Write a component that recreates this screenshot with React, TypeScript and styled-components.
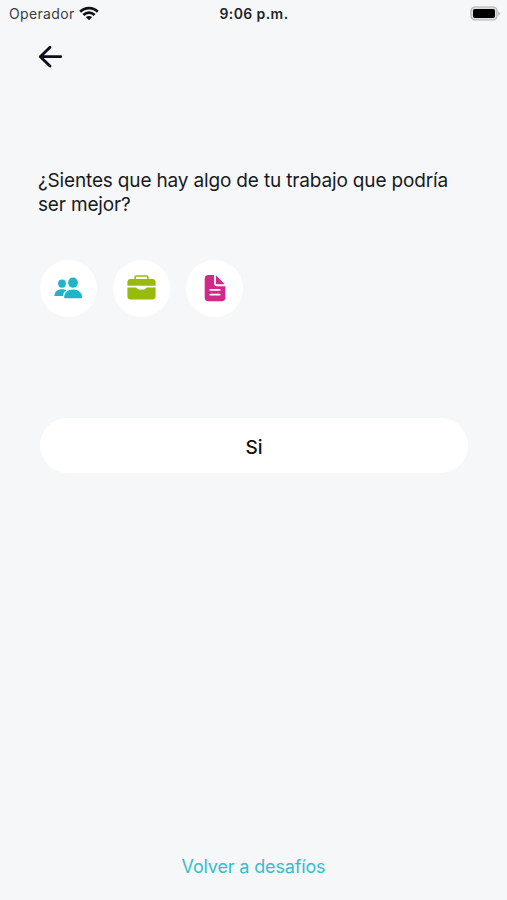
import React from "react";
import styled, { createGlobalStyle } from "styled-components";
import { IoDocumentText } from "react-icons/io5";

const GlobalStyle = createGlobalStyle`
  * { box-sizing: border-box; }
  body { margin: 0; background: #f5f7f9; }
  button { border: 0; padding: 0; background: none; font: inherit; cursor: pointer; }
`;

const Screen = styled.main`
  display: flex;
  flex-direction: column;
  height: 100vh;
  overflow: hidden;
  background: #f5f7f9;
  color: #191a1c;
  font-family: Inter, "Liberation Sans", sans-serif;
`;

const StatusBar = styled.header`
  display: grid;
  grid-template-columns: 1fr auto 1fr;
  align-items: center;
  height: 26px;
  padding: 0 6px 0 9px;
`;

const Carrier = styled.div`
  display: flex;
  align-items: center;
  gap: 4px;
  font-size: 14px;
  letter-spacing: 0.35px;
  color: #3b3c3e;
`;

const Clock = styled.time`
  margin-right: 2px;
  font-size: 14px;
  font-weight: 600;
  letter-spacing: 0.4px;
  color: #232426;
`;

const Battery = styled.svg`
  display: block;
  justify-self: end;
`;

const BackButton = styled.button`
  align-self: flex-start;
  margin: 19px 0 0 38px;
  width: 25px;
  height: 24px;
  svg { display: block; }
`;

const Question = styled.h1`
  margin: 100px 0 0 38px;
  font-size: 19px;
  font-weight: 400;
  line-height: 24px;
  letter-spacing: -0.16px;
  white-space: nowrap;
`;

const Topics = styled.div`
  display: flex;
  gap: 16px;
  margin: 43px 0 0 40px;
`;

const Topic = styled.button<{ $color: string }>`
  display: flex;
  align-items: center;
  justify-content: center;
  width: 57px;
  height: 57px;
  padding-bottom: 2px;
  border-radius: 50%;
  && { background: #fff; padding-bottom: 2px; }
  color: ${(p) => p.$color};
`;

const Answer = styled.button`
  height: 55px;
  margin: 101px 39px 0 40px;
  border-radius: 28px;
  color: #111;
  && { padding-top: 3px; background: #fff; font-size: 19px; font-weight: 500; }
`;

const BackLink = styled.button`
  align-self: center;
  margin: auto 0 21px;
  color: #35bdcd;
  && { font-size: 18px; line-height: 24px; }
  letter-spacing: -0.15px;
`;

const PeopleIcon = () => (
  <svg width="29" height="22" viewBox="0 0 29 22" fill="currentColor">
    <ellipse cx="8" cy="6.6" rx="3.9" ry="4.2" />
    <ellipse cx="19" cy="5.6" rx="4.9" ry="5.1" />
    <path d="M.4 18.9C.8 14.5 3.7 12.3 8 12.3c1.8 0 3.2.3 4.5 1C10.6 14.6 9.4 16.4 8.9 18.9Z" />
    <path d="M10.1 20.3c0-4.6 3.7-7.8 9-7.8s9 3.2 9 7.8c0 .5-.4.9-.9.9H11c-.5 0-.9-.4-.9-.9Z" />
  </svg>
);

const BriefcaseIcon = () => (
  <svg width="29" height="25" viewBox="0 0 29 25" fill="currentColor">
    <path d="M8.1 5V2.6C8.1 1.6 8.8 1 9.8 1h9.4c1 0 1.7.6 1.7 1.6V5" fill="none" stroke="currentColor" strokeWidth="1.6" />
    <path d="M3.5 4h22c1.8 0 3.1 1.3 3.1 3.1v3.7H.4V7.1C.4 5.3 1.7 4 3.5 4Z" />
    <path d="M.4 12.4h8.7c.4 0 .6.3.8.7.4.9 1.1 1.4 2 1.4h5.2c.9 0 1.6-.5 2-1.4.2-.4.4-.7.8-.7h8.7v9c0 1.8-1.3 3.1-3.1 3.1h-22C1.7 24.5.4 23.2.4 21.4Z" />
  </svg>
);

export default function App() {
  return (
    <>
      <GlobalStyle />
      <Screen>
        <StatusBar>
          <Carrier>
            <span>Operador</span>
            <svg width="20" height="15" viewBox="0 0 20 15" fill="none" stroke="#111214" strokeWidth="2.7">
              <path d="M1.2 5.7C6.2.9 13.8.9 18.8 5.7" />
              <path d="M4.4 8.9C7.6 5.9 12.4 5.9 15.6 8.9" />
              <path d="M10 14.2 6.9 11.1C8.7 9.5 11.3 9.5 13.1 11.1Z" fill="#111214" stroke="none" />
            </svg>
          </Carrier>
          <Clock>9:06 p.m.</Clock>
          <Battery width="31" height="15" viewBox="0 0 31 15">
            <rect x="1" y="1" width="26" height="13" rx="4" fill="#dedfe0" stroke="#b3b4b6" strokeWidth="1.2" />
            <rect x="3" y="3" width="22" height="9" rx="1.8" fill="#000" />
            <path d="M28.3 5.2q3 2.3 0 4.6Z" fill="#a9abad" />
          </Battery>
        </StatusBar>
        <BackButton aria-label="Volver">
          <svg width="25" height="24" viewBox="0 0 25 24" fill="none" stroke="#0d0e1c" strokeWidth="2.8" strokeLinecap="round" strokeLinejoin="round">
            <path d="M12 2.3 2.3 11.7 12 21.1M2.3 11.7H22.7" />
          </svg>
        </BackButton>
        <Question>
          ¿Sientes que hay algo de tu trabajo que podría
          <br />
          ser mejor?
        </Question>
        <Topics>
          <Topic $color="#20b4ca" aria-label="Personas"><PeopleIcon /></Topic>
          <Topic $color="#98ba0b" aria-label="Trabajo"><BriefcaseIcon /></Topic>
          <Topic $color="#d32887" aria-label="Documento"><IoDocumentText size={30} /></Topic>
        </Topics>
        <Answer>Si</Answer>
        <BackLink>Volver a desafíos</BackLink>
      </Screen>
    </>
  );
}
